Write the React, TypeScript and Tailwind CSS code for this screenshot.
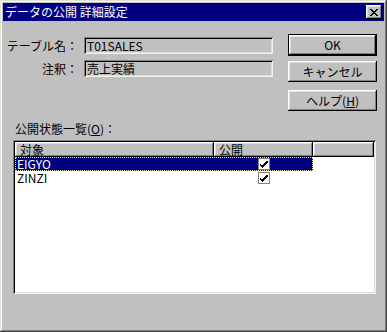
import { ReactNode } from 'react'

const raised =
  'shadow-[inset_-1px_-1px_#000,inset_1px_1px_#fff,inset_-2px_-2px_#808080,inset_2px_2px_#dfdfdf]'
const sunken =
  'shadow-[inset_1px_1px_#808080,inset_-1px_-1px_#f4f3e6,inset_2px_2px_#000,inset_-2px_-2px_#dfdfd4]'

const rows = [
  { name: 'EIGYO', published: true, selected: true },
  { name: 'ZINZI', published: true, selected: false },
]

export default function App() {
  return (
    <div
      className="h-[332px] w-[387px] bg-[#c0c0c0] p-[3px] text-[12px] leading-[14px] text-black shadow-[inset_-1px_-1px_#404040,inset_1px_1px_#dfdfd4,inset_-2px_-2px_#808080,inset_2px_2px_#fff]"
      style={{ fontFamily: '"Noto Sans CJK JP", "Liberation Sans", sans-serif' }}
    >
      <div className="flex h-[18px] items-center justify-between bg-[#000080] pl-[2px] pr-[2px]">
        <span className="text-white">データの公開 詳細設定</span>
        <CloseButton />
      </div>

      <div className="flex pt-[13px]">
        <div className="flex flex-col gap-[6px] pt-[3px]">
          <Field label="テーブル名：" value="T01SALES" />
          <Field label="注釈：" value="売上実績" />
        </div>
        <div className="ml-[15px] flex w-[89px] flex-col">
          <Button isDefault>OK</Button>
          <div className="mt-[5px]">
            <Button>キャンセル</Button>
          </div>
          <div className="mt-[8px]">
            <Button>
              ヘルプ(<span className="underline">H</span>)
            </Button>
          </div>
        </div>
      </div>

      <div className="ml-[12px] mt-[11px]">
        公開状態一覧(<span className="underline">O</span>)：
      </div>

      <div className={`ml-[10px] mt-[4px] h-[154px] w-[363px] bg-white p-[2px] ${sunken}`}>
        <div className="flex h-[15px] bg-[#c0c0c0]">
          <HeaderCell width="w-[199px]">対象</HeaderCell>
          <HeaderCell width="w-[99px]">公開</HeaderCell>
          <HeaderCell width="flex-1" />
        </div>
        {rows.map((row) => (
          <div key={row.name} className="flex h-[14px] leading-[12px]">
            <div
              className={`flex w-[298px] items-center ${
                row.selected ? 'bg-[#000080] text-white outline outline-1 -outline-offset-1 outline-dotted outline-[#e8e8c8]' : ''
              }`}
            >
              <span className="w-[199px] pl-[2px]">{row.name}</span>
              <span className="flex w-[99px] justify-center">
                <CheckBox checked={row.published} />
              </span>
            </div>
          </div>
        ))}
      </div>
    </div>
  )
}

function Field({ label, value }: { label: string; value: string }) {
  return (
    <div className="flex items-center">
      <span className="w-[75px] text-right">{label}</span>
      <div className={`ml-[6px] flex h-[17px] w-[189px] items-center pl-[3px] ${sunken}`}>{value}</div>
    </div>
  )
}

function Button({ children, isDefault }: { children: ReactNode; isDefault?: boolean }) {
  if (isDefault)
    return (
      <div className="h-[22px] border border-black">
        <div className={`flex h-full items-center justify-center ${raised}`}>{children}</div>
      </div>
    )
  return <div className={`flex h-[21px] items-center justify-center ${raised}`}>{children}</div>
}

function HeaderCell({ width, children }: { width: string; children?: ReactNode }) {
  return <div className={`flex items-center pl-[5px] ${width} ${raised}`}>{children}</div>
}

function CheckBox({ checked }: { checked: boolean }) {
  return (
    <span className="flex h-[12px] w-[12px] items-center justify-center border border-[#808080] bg-white">
      {checked ? (
        <svg width="8" height="7" viewBox="0 0 8 7" shapeRendering="crispEdges">
          <path d="M0 3h1v1H0zM0 4h3v1H0zM1 5h2v1H1zM2 6h1v1H2zM3 3h1v3H3zM4 2h1v3H4zM5 1h1v3H5zM6 0h1v3H6zM7 0h1v2H7z" fill="#000" />
        </svg>
      ) : null}
    </span>
  )
}

function CloseButton() {
  return (
    <div className={`flex h-[14px] w-[16px] items-center justify-center bg-[#c0c0c0] ${raised}`}>
      <svg width="8" height="7" viewBox="0 0 8 7" shapeRendering="crispEdges">
        <path d="M0 0h2l2 2.5L6 0h2L5 3.5 8 7H6L4 4.5 2 7H0l3-3.5z" fill="#000" />
      </svg>
    </div>
  )
}
